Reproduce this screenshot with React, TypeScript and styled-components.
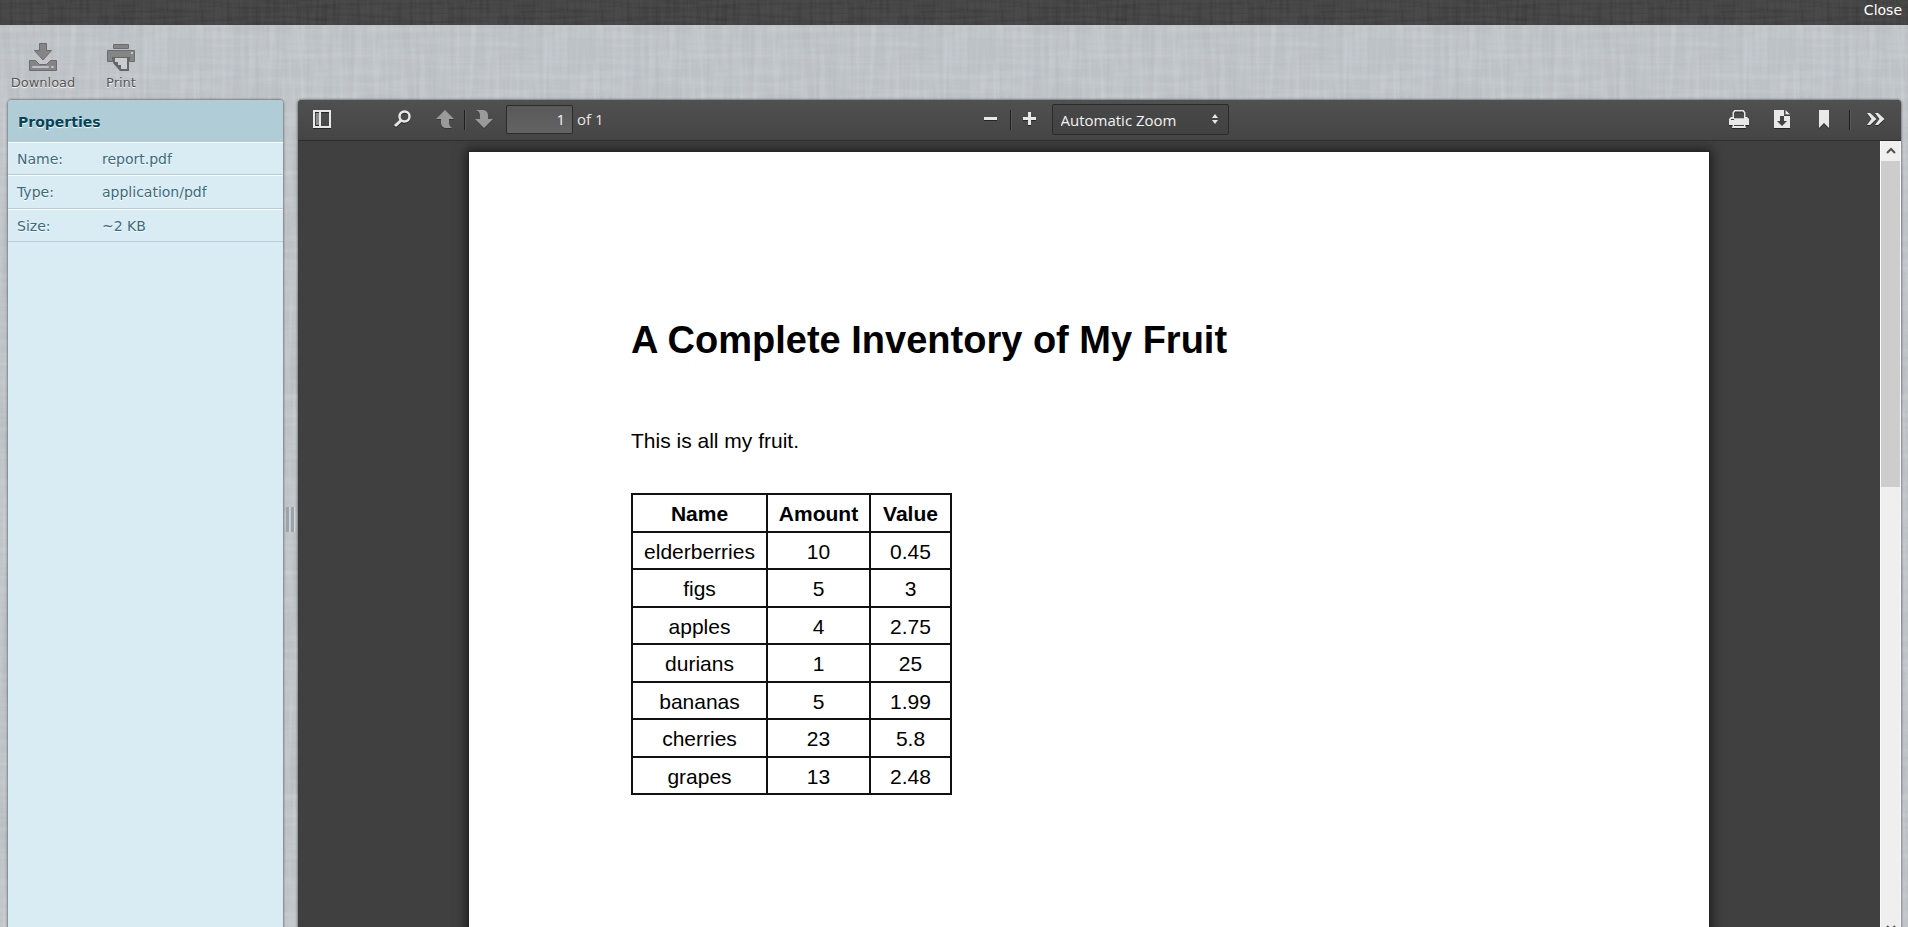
import React from 'react';
import styled, { createGlobalStyle } from 'styled-components';

const GlobalStyle = createGlobalStyle`
  *, *::before, *::after { box-sizing: border-box; }
  html, body, #root { height: 100%; }
  body {
    margin: 0;
    overflow: hidden;
    font-family: "DejaVu Sans", Verdana, sans-serif;
    font-size: 14px;
  }
  button, input, select { font: inherit; color: inherit; }
`;

/* Woven fibres: noise stretched along one axis, tinted white or black. */
const fibre = (frequency: string, tone: number, strength: number, seed: number) =>
  `url("data:image/svg+xml,${encodeURIComponent(
    `<svg xmlns='http://www.w3.org/2000/svg' width='400' height='400'><filter id='f' x='0' y='0' width='100%' height='100%'><feTurbulence type='fractalNoise' baseFrequency='${frequency}' numOctaves='3' seed='${seed}' stitchTiles='stitch'/><feColorMatrix values='0 0 0 0 ${tone} 0 0 0 0 ${tone} 0 0 0 0 ${tone} ${strength} 0 0 0 ${-strength * 0.4}'/></filter><rect width='400' height='400' filter='url(#f)'/></svg>`,
  )}")`;

const lightLinen = [
  fibre('0.15 0.012', 1, 0.3, 3),
  fibre('0.012 0.15', 1, 0.25, 8),
  fibre('0.3 0.01', 0, 0.06, 5),
].join(', ');

const darkLinen = [
  fibre('0.3 0.02', 0, 0.3, 4),
  fibre('0.02 0.3', 0, 0.25, 9),
].join(', ');

const Shell = styled.div`
  height: 100%;
  display: flex;
  flex-direction: column;
  overflow: hidden;
  background: ${lightLinen}, #bdc2c6;
`;

const TopBar = styled.header`
  flex: none;
  height: 25px;
  padding: 0 6px;
  display: flex;
  justify-content: flex-end;
  background: ${darkLinen}, #4a4a4a;
`;

const CloseLink = styled.a`
  color: #fff;
  line-height: 20px;
  text-decoration: none;
`;

const Actions = styled.nav`
  flex: none;
  height: 75px;
  padding: 17px 4px 0;
  display: flex;
`;

const ActionButton = styled.button`
  width: 78px;
  height: 52px;
  padding: 0;
  border: 0;
  background: none;
  display: flex;
  flex-direction: column;
  align-items: center;
  gap: 1px;
  font-size: 13px;
  line-height: 20px;
  color: #555;
  text-shadow: 0 1px 1px #fff;
`;

const Workspace = styled.main`
  flex: 1;
  min-height: 0;
  margin: 0 7px -12px 8px;
  display: flex;
`;

const Sidebar = styled.aside`
  flex: none;
  width: 275px;
  background: #d9ecf4;
  border-radius: 4px 4px 0 0;
  box-shadow: 0 0 2px 1px rgba(0, 0, 0, 0.35);
  overflow: hidden;
`;

const SidebarTitle = styled.h2`
  margin: 0;
  height: 42px;
  padding: 0 10px;
  font-size: 14px;
  line-height: 44px;
  color: #03455a;
  background: #b0ccd7;
  text-shadow: 0 1px 1px #fff;
`;

const PropertyList = styled.dl`
  margin: 0;
`;

const PropertyRow = styled.div`
  display: flex;
  height: 33px;
  padding: 0 9px;
  border-top: 1px solid #fff;
  border-bottom: 1px solid #b5ced8;
  line-height: 32px;
  color: #3b6b7c;
  text-shadow: 0 1px 1px #fff;

  &:nth-child(2) {
    height: 34px;
  }
`;

const PropertyName = styled.dt`
  width: 85px;
`;

const PropertyValue = styled.dd`
  margin: 0;
`;

const Splitter = styled.div`
  flex: none;
  width: 15px;
  padding-right: 1px;
  display: flex;
  align-items: center;
  justify-content: center;
  gap: 1px;
`;

const Grip = styled.span`
  width: 4px;
  height: 25px;
  background: #9ba4ab;
  border-right: 1px solid #d3d7da;
`;

const Viewer = styled.section`
  flex: 1;
  min-width: 0;
  display: flex;
  flex-direction: column;
  border-radius: 4px 4px 0 0;
  box-shadow: 0 0 2px 1px rgba(0, 0, 0, 0.35);
  overflow: hidden;
  background: #404040;
  font-family: "Open Sans", "Noto Sans", sans-serif;
`;

const ViewerToolbar = styled.div`
  flex: none;
  height: 41px;
  padding: 0 9px 1px 8px;
  display: grid;
  grid-template-columns: 1fr auto 1fr;
  align-items: center;
  background: linear-gradient(#505050, #454545);
  border-bottom: 1px solid #2c2c2c;
  color: #e6e6e6;
  font-size: 15px;
`;

const ToolGroup = styled.div<{ $align?: string }>`
  display: flex;
  align-items: center;
  justify-content: ${(p) => p.$align ?? 'flex-start'};
`;

const ToolButton = styled.button<{ $before?: number }>`
  flex: none;
  width: 32px;
  height: 28px;
  margin: 0 0 0 ${(p) => p.$before ?? 0}px;
  padding: 0 0 2px;
  border: 0;
  background: none;
  display: grid;
  place-items: center;

  &:disabled { opacity: 0.5; }
  svg { display: block; filter: drop-shadow(0 1px 0 rgba(0, 0, 0, 0.5)); }
`;

const Divider = styled.span<{ $space?: number }>`
  flex: none;
  width: 1px;
  height: 20px;
  margin: 0 ${(p) => p.$space ?? 3}px;
  background: #1e1e1e;
  box-shadow: 1px 0 0 #5a5a5a;
`;

const PageInput = styled.input`
  width: 67px;
  height: 29px;
  margin: 0 4px 0 6px;
  padding: 0 7px 1px 4px;
  text-align: right;
  color: #f2f2f2;
  background: linear-gradient(#595959, #636363);
  border: 1px solid #2b2b2b;
  border-radius: 2px;
  outline: 0;
`;

const PageCount = styled.label`
  padding-bottom: 2px;
`;

const ZoomField = styled.label`
  position: relative;
  margin-left: 6px;

  svg {
    position: absolute;
    right: 11px;
    top: 10px;
    pointer-events: none;
  }
`;

const ZoomSelect = styled.select`
  display: block;
  width: 177px;
  height: 31px;
  padding: 0 8px;
  appearance: none;
  color: #f2f2f2;
  background: linear-gradient(#484848, #424242);
  border: 1px solid #2b2b2b;
  border-radius: 2px;
  outline: 0;
`;

const Canvas = styled.div`
  flex: 1;
  min-height: 0;
  display: flex;
`;

const PageArea = styled.div`
  flex: 1;
  min-width: 0;
  padding-top: 11px;
  overflow: hidden;
  display: flex;
  justify-content: center;
  align-items: flex-start;
  background: #404040;
`;

const Sheet = styled.article`
  flex: 0 1 1240px;
  min-height: 1754px;
  padding: 166px 162px;
  background: #fff;
  box-shadow: 0 0 1px 1px #2a2327, 0 0 11px 3px rgba(0, 0, 0, 0.55);
  color: #000;
  font-family: "Liberation Sans", Arial, sans-serif;
  font-size: 21px;
  line-height: 24px;
`;

const SheetTitle = styled.h1`
  margin: 0;
  font-size: 38px;
  line-height: 44px;
`;

const Paragraph = styled.p`
  margin: 67px 0 40px;
`;

const FruitTable = styled.table`
  border-collapse: collapse;
  table-layout: fixed;
  width: 319px;
  text-align: center;

  th, td {
    padding: 2px 0 0;
    border: 2px solid #111;
  }

  tr { height: 38px; }
  tbody tr:nth-child(odd) { height: 37px; }
`;

const Scrollbar = styled.div`
  flex: none;
  width: 21px;
  display: flex;
  flex-direction: column;
  background: #efefef;
  border: solid #fafafa;
  border-width: 0 1px;
`;

const ScrollButton = styled.button`
  flex: none;
  height: 20px;
  padding: 0 0 1px;
  border: 0;
  background: none;
  display: grid;
  place-items: center;
`;

const ScrollTrack = styled.div`
  flex: 1;
`;

const ScrollThumb = styled.div`
  height: 43%;
  background: #cdcdcd;
`;

const DownloadIcon = () => (
  <svg width="28" height="30" viewBox="0 0 28 30" fill="#858585" stroke="#6c6c6c" aria-hidden="true">
    <path d="M10.500 1.500h7v7h5l-8.500 9.500-8.500-9.500h5z" />
    <path d="M.5 18.500h6l4 4h7l4-4h6v10H.5z" />
    <path d="M3.500 24.500h16v1h-16z" fill="#bcc0c3" stroke="#bcc0c3" />
    <path d="M22.500 24.500h2v1h-2z" fill="#bcc0c3" stroke="#bcc0c3" />
  </svg>
);

const PrintIcon = () => (
  <svg width="28" height="30" viewBox="0 0 28 30" aria-hidden="true">
    <path d="M6.500 2.500h15v4h-15z" fill="#858585" stroke="#6c6c6c" />
    <path d="M.5 8.500h27v11h-5v-4h-17v4h-5z" fill="#858585" stroke="#6c6c6c" />
    <path d="M24 10h2v2h-2z" fill="#c6c9cb" />
    <path d="M5 15h18v2h-1v12h-9l-7-8v-4H5z" fill="#666" />
    <path d="M8 16h12v11h-6v-4h-3v-3H8z" fill="#c9cdd0" />
  </svg>
);

const iconFill = '#e8e8e8';

const SidebarIcon = () => (
  <svg width="18" height="18" viewBox="0 0 18 18" aria-hidden="true">
    <path d="M0 0h18v18H0zM2 2v14h14V2z" fill={iconFill} fillRule="evenodd" />
    <path d="M3 3h3v12H3z" fill="#8d8d8d" />
    <path d="M6 2h2v14H6z" fill={iconFill} />
  </svg>
);

const SearchIcon = () => (
  <svg width="18" height="18" viewBox="0 0 18 18" fill="none" stroke={iconFill} aria-hidden="true">
    <circle cx="11.500" cy="6.500" r="5" strokeWidth="2.500" />
    <path d="M8 10.500L2 16" strokeWidth="3" />
  </svg>
);

const PreviousIcon = () => (
  <svg width="18" height="18" viewBox="0 0 18 18" fill={iconFill} aria-hidden="true">
    <path d="M9 0l9 9h-5v3c0 3 1 5 3 6h-5c-4 0-6-2-6-6V9H0z" />
  </svg>
);

const NextIcon = () => (
  <svg width="18" height="18" viewBox="0 0 18 18" fill={iconFill} aria-hidden="true">
    <path d="M9 18l9-9h-5V6c0-4-2-6-6-6H1c3 1 4 3 4 6v3H0z" />
  </svg>
);

const MinusIcon = () => (
  <svg width="13" height="13" viewBox="0 0 13 13" fill={iconFill} aria-hidden="true">
    <path d="M0 5h13v3H0z" />
  </svg>
);

const PlusIcon = () => (
  <svg width="13" height="13" viewBox="0 0 13 13" fill={iconFill} aria-hidden="true">
    <path d="M5 0h3v5h5v3H8v5H5V8H0V5h5z" />
  </svg>
);

const PrinterIcon = () => (
  <svg width="20" height="18" viewBox="0 0 20 18" aria-hidden="true">
    <path d="M5.750.75h8.500l1.500 2V9H4.250V2.750z" fill="none" stroke={iconFill} strokeWidth="1.500" />
    <path d="M2 7h2v2h12V7h2l2 2v6H0V9z" fill={iconFill} />
    <path d="M2 9h3v1H2z" fill="#444" />
    <path d="M4 14h12l1 4H3z" fill={iconFill} />
    <path d="M5 15h10v1H5z" fill="#444" />
  </svg>
);

const SaveIcon = () => (
  <svg width="16" height="18" viewBox="0 0 16 18" aria-hidden="true">
    <path d="M0 0h10v6h6v12H0z" fill={iconFill} />
    <path d="M11.500 0L16 4.500h-4.500z" fill={iconFill} />
    <path d="M6 6h4v5h3l-5 5-5-5h3z" fill="#444" />
  </svg>
);

const BookmarkIcon = () => (
  <svg width="10" height="18" viewBox="0 0 10 18" fill={iconFill} aria-hidden="true">
    <path d="M0 0h10v18l-5-5-5 5z" />
  </svg>
);

const MoreIcon = () => (
  <svg width="18" height="14" viewBox="0 0 18 14" fill={iconFill} aria-hidden="true">
    <path d="M0 1h3l6.500 6L3 13H0l4.500-6z" />
    <path d="M8 1h3l6.500 6-6.500 6H8l4.500-6z" />
  </svg>
);

const SelectArrows = () => (
  <svg width="6" height="10" viewBox="0 0 6 10" fill={iconFill} aria-hidden="true">
    <path d="M3 0l3 4H0zM0 6h6l-3 4z" />
  </svg>
);

const ScrollArrow = ({ down }: { down?: boolean }) => (
  <svg width="10" height="7" viewBox="0 0 10 7" fill="none" stroke="#505050" strokeWidth="2" aria-hidden="true">
    <path d={down ? 'M1 1l4 4 4-4' : 'M1 6l4-4 4 4'} />
  </svg>
);

const properties = [
  ['Name:', 'report.pdf'],
  ['Type:', 'application/pdf'],
  ['Size:', '~2 KB'],
];

const fruit = [
  ['elderberries', '10', '0.45'],
  ['figs', '5', '3'],
  ['apples', '4', '2.75'],
  ['durians', '1', '25'],
  ['bananas', '5', '1.99'],
  ['cherries', '23', '5.8'],
  ['grapes', '13', '2.48'],
];

export default function App() {
  return (
    <>
      <GlobalStyle />
      <Shell>
        <TopBar>
          <CloseLink href="#close">Close</CloseLink>
        </TopBar>
        <Actions aria-label="Document actions">
          <ActionButton type="button"><DownloadIcon />Download</ActionButton>
          <ActionButton type="button"><PrintIcon />Print</ActionButton>
        </Actions>
        <Workspace>
          <Sidebar>
            <SidebarTitle>Properties</SidebarTitle>
            <PropertyList>
              {properties.map(([name, value]) => (
                <PropertyRow key={name}>
                  <PropertyName>{name}</PropertyName>
                  <PropertyValue>{value}</PropertyValue>
                </PropertyRow>
              ))}
            </PropertyList>
          </Sidebar>
          <Splitter>
            <Grip />
            <Grip />
          </Splitter>
          <Viewer>
            <ViewerToolbar>
              <ToolGroup>
                <ToolButton type="button" aria-label="Toggle sidebar"><SidebarIcon /></ToolButton>
                <ToolButton type="button" aria-label="Find" $before={48}><SearchIcon /></ToolButton>
                <ToolButton type="button" aria-label="Previous page" $before={11} disabled><PreviousIcon /></ToolButton>
                <Divider />
                <ToolButton type="button" aria-label="Next page" disabled><NextIcon /></ToolButton>
                <PageInput id="page" aria-label="Page" defaultValue="1" />
                <PageCount htmlFor="page">of 1</PageCount>
              </ToolGroup>
              <ToolGroup>
                <ToolButton type="button" aria-label="Zoom out" $before={5}><MinusIcon /></ToolButton>
                <Divider />
                <ToolButton type="button" aria-label="Zoom in"><PlusIcon /></ToolButton>
                <ZoomField>
                  <ZoomSelect aria-label="Zoom" defaultValue="auto">
                    <option value="auto">Automatic Zoom</option>
                  </ZoomSelect>
                  <SelectArrows />
                </ZoomField>
              </ToolGroup>
              <ToolGroup $align="flex-end">
                <ToolButton type="button" aria-label="Print document"><PrinterIcon /></ToolButton>
                <ToolButton type="button" aria-label="Save" $before={11}><SaveIcon /></ToolButton>
                <ToolButton type="button" aria-label="Bookmark" $before={10}><BookmarkIcon /></ToolButton>
                <Divider $space={9} />
                <ToolButton type="button" aria-label="Tools" $before={1}><MoreIcon /></ToolButton>
              </ToolGroup>
            </ViewerToolbar>
            <Canvas>
              <PageArea>
                <Sheet>
                  <SheetTitle>A Complete Inventory of My Fruit</SheetTitle>
                  <Paragraph>This is all my fruit.</Paragraph>
                  <FruitTable>
                    <colgroup>
                      <col width="135" />
                      <col width="103" />
                      <col width="81" />
                    </colgroup>
                    <thead>
                      <tr>
                        <th scope="col">Name</th>
                        <th scope="col">Amount</th>
                        <th scope="col">Value</th>
                      </tr>
                    </thead>
                    <tbody>
                      {fruit.map(([name, amount, value]) => (
                        <tr key={name}>
                          <td>{name}</td>
                          <td>{amount}</td>
                          <td>{value}</td>
                        </tr>
                      ))}
                    </tbody>
                  </FruitTable>
                </Sheet>
              </PageArea>
              <Scrollbar>
                <ScrollButton type="button" aria-label="Scroll up"><ScrollArrow /></ScrollButton>
                <ScrollTrack><ScrollThumb /></ScrollTrack>
                <ScrollButton type="button" aria-label="Scroll down"><ScrollArrow down /></ScrollButton>
              </Scrollbar>
            </Canvas>
          </Viewer>
        </Workspace>
      </Shell>
    </>
  );
}
